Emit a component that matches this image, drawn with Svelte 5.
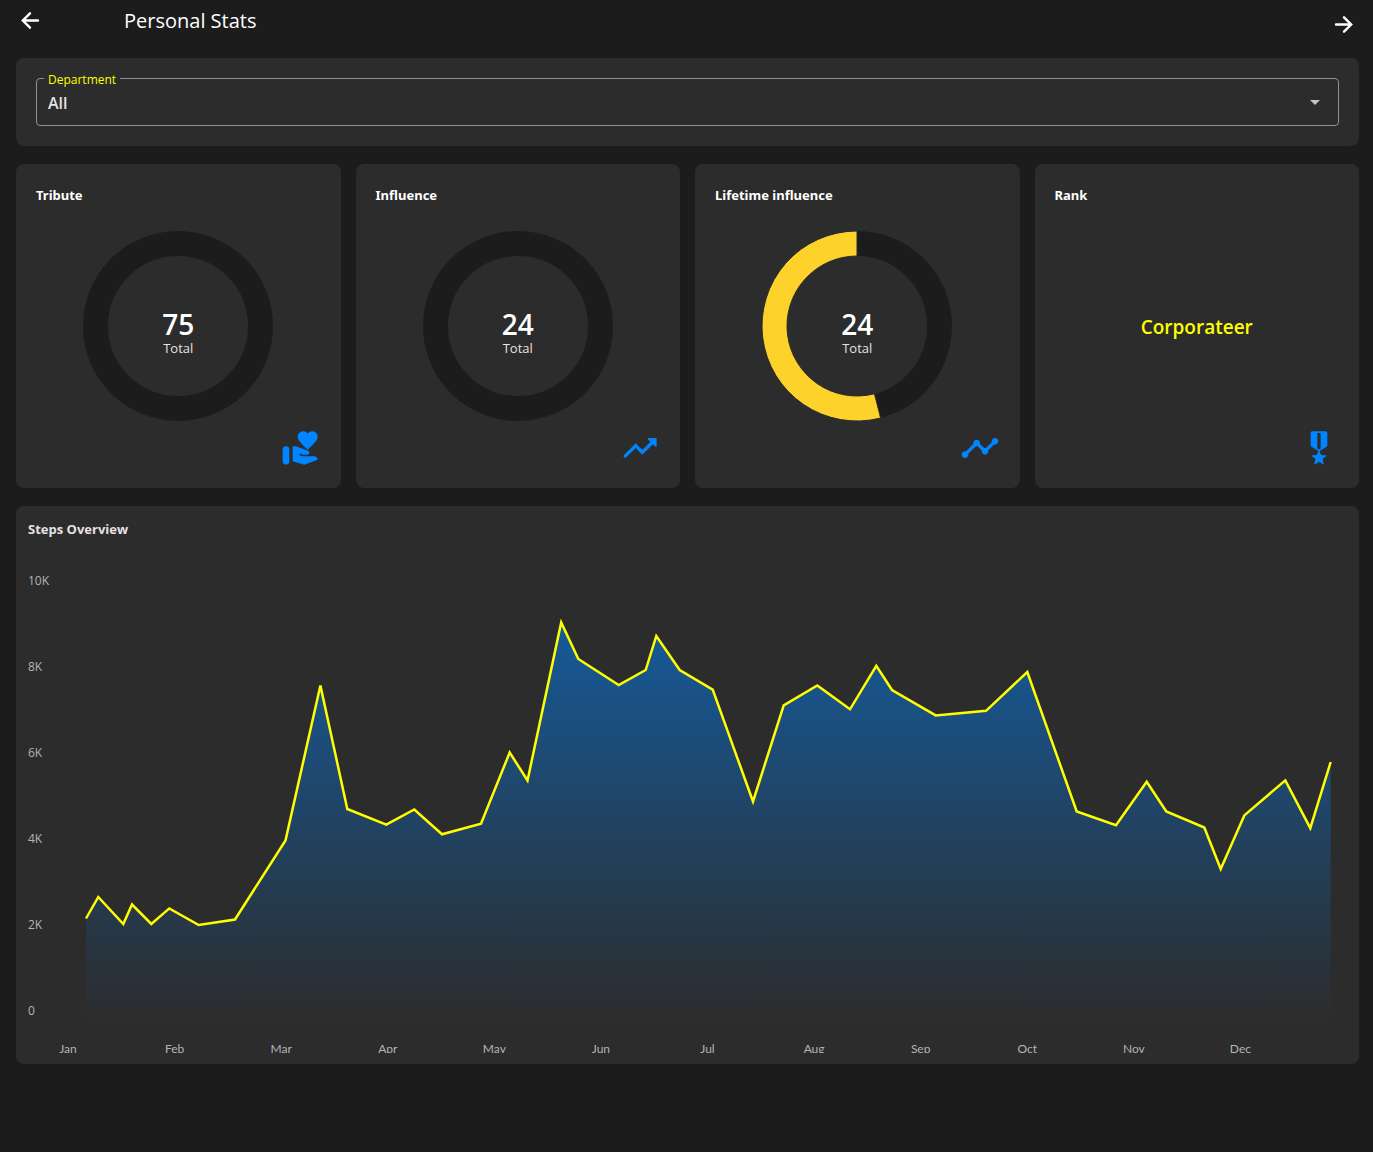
<script>
  const departments = ['All', 'Sales', 'Operations', 'Engineering'];
  let department = $state('All');

  // share: percentage of the ring that is filled, counted back from twelve o'clock
  const stats = [
    {
      title: 'Tribute',
      total: 75,
      share: 0,
      icon: 'M3 11a2 2 0 0 1 2 2v7a2 2 0 0 1-4 0v-7a2 2 0 0 1 2-2zM16 3.25C16.65 2.49 17.66 2 18.7 2 20.55 2 22 3.45 22 5.3c0 2.27-2.91 4.9-6 7.7-3.09-2.81-6-5.44-6-7.7C10 3.45 11.45 2 13.3 2c1.04 0 2.05.49 2.7 1.25zM20 17h-7l-2.09-.73.33-.94L13 16h2.8c.65 0 1.2-.55 1.2-1.2 0-.49-.3-.93-.76-1.12L8.97 11H7v9.02L14 22l8.01-3c-.01-1.1-.9-2-2.01-2z',
    },
    {
      title: 'Influence',
      total: 24,
      share: 0,
      icon: 'M16.85 6.85l1.44 1.44-4.88 4.88-3.29-3.29L9.41 9.2 8.7 9.88l-6.29 6.3c-.39.39-.39 1.02 0 1.41.39.39 1.02.39 1.41 0L9.41 12l4 4 .7-.71 5.59-5.58 1.44 1.44c.31.31.85.09.85-.35V6.5c.01-.28-.21-.5-.49-.5h-4.29c-.45 0-.67.54-.36.85z',
    },
    {
      title: 'Lifetime influence',
      total: 24,
      share: 54,
      icon: 'M23 8c0 1.1-.9 2-2 2-.18 0-.35-.02-.51-.07l-3.56 3.55c.05.16.07.34.07.52 0 1.1-.9 2-2 2s-2-.9-2-2c0-.18.02-.36.07-.52l-2.55-2.55c-.16.05-.34.07-.52.07s-.36-.02-.52-.07l-4.55 4.56c.05.16.07.33.07.51 0 1.1-.9 2-2 2s-2-.9-2-2 .9-2 2-2c.18 0 .35.02.51.07l4.56-4.55C8.02 9.36 8 9.18 8 9c0-1.1.9-2 2-2s2 .9 2 2c0 .18-.02.36-.07.52l2.55 2.55c.16-.05.34-.07.52-.07s.36.02.52.07l3.55-3.56C19.02 8.35 19 8.18 19 8c0-1.1.9-2 2-2s2 .9 2 2z',
    },
    {
      title: 'Rank',
      rank: 'Corporateer',
      icon: 'M17 10.43V3c0-.55-.45-1-1-1H8c-.55 0-1 .45-1 1v7.43c0 .35.18.68.49.86l4.18 2.51-.99 2.34-3.41.29 2.59 2.24L9.07 22 12 20.23 14.93 22l-.78-3.33 2.59-2.24-3.41-.29-.99-2.34 4.18-2.51c.3-.18.48-.5.48-.86zm-4 1.8l-1 .6-1-.6V3h2v9.23z',
    },
  ];

  const yLabels = ['10K', '8K', '6K', '4K', '2K', '0'];
  const months = ['Jan', 'Feb', 'Mar', 'Apr', 'May', 'Jun', 'Jul', 'Aug', 'Sep', 'Oct', 'Nov', 'Dec'];

  const points = [
    [86, 918.5], [98.3, 897], [123.3, 924], [132, 904.5], [151.3, 924], [169.3, 908.4], [198.7, 925],
    [235, 919.5], [285.5, 840.5], [320.4, 685.5], [347.3, 809], [386.3, 824.6], [414.3, 809.5],
    [442, 834.3], [481, 823.7], [509.7, 752.5], [527.5, 780.5], [561.2, 622.5], [578.3, 659],
    [618.7, 685], [645.7, 670], [656.3, 636], [679.7, 670], [712.7, 689.7], [753, 801.5],
    [783.7, 705.3], [817.3, 685.4], [850, 709.3], [876.3, 665.8], [892, 690], [935.7, 715.4],
    [986, 710.8], [1027.3, 672], [1076.7, 811.5], [1116, 825.2], [1146.7, 781.7], [1166.3, 811.5],
    [1204.3, 827.5], [1220.7, 869], [1244.3, 815.4], [1285.3, 780.4], [1310.3, 828.2], [1330.7, 762],
  ];
  const line = 'M' + points.map((p) => p.join(' ')).join('L');
  const area = `${line}V1024H${points[0][0]}Z`;

  // Ring sector from the given share back up to twelve o'clock
  function ringArc(share) {
    const a = (1 - share / 100) * 2 * Math.PI;
    const at = (r) => `${95 + r * Math.sin(a)} ${95 - r * Math.cos(a)}`;
    const large = share > 50 ? 1 : 0;
    return `M${at(95)}A95 95 0 ${large} 1 95 0V25A70 70 0 ${large} 0 ${at(70)}Z`;
  }
</script>

<div class="page">
  <header>
    <button class="nav" aria-label="Back">
      <svg width="24" height="24" viewBox="0 0 24 24"><path d="M20 12.5H5M12 5.3l-7.2 7.2 7.2 7.2" /></svg>
    </button>
    <h1>Personal Stats</h1>
    <button class="nav next" aria-label="Next">
      <svg width="24" height="24" viewBox="0 0 24 24"><path d="M4 12.5h15M12 5.3l7.2 7.2-7.2 7.2" /></svg>
    </button>
  </header>

  <main>
    <section class="card filter">
      <div class="field">
        <label for="department">Department</label>
        <select id="department" bind:value={department}>
          {#each departments as name}
            <option>{name}</option>
          {/each}
        </select>
        <svg class="caret" width="10" height="5" viewBox="0 0 10 5"><path d="M0 0h10L5 5z" /></svg>
      </div>
    </section>

    <div class="stats">
      {#each stats as stat}
        <section class="card stat">
          <h2>{stat.title}</h2>
          <div class="body">
            {#if stat.rank}
              <p class="rank">{stat.rank}</p>
            {:else}
              <svg class="ring" width="190" height="190" viewBox="0 0 190 190">
                <circle class="track" cx="95" cy="95" r="82.5" />
                {#if stat.share}
                  <path class="fill" d={ringArc(stat.share)} />
                {/if}
              </svg>
              <div class="total">
                <strong>{stat.total}</strong>
                <span>Total</span>
              </div>
            {/if}
          </div>
          <svg class="icon" width="40" height="40" viewBox="0 0 24 24"><path d={stat.icon} /></svg>
        </section>
      {/each}
    </div>

    <section class="card chart">
      <h2>Steps Overview</h2>
      <div class="plot">
        <div class="y-axis">
          {#each yLabels as label}<span>{label}</span>{/each}
        </div>
        <svg viewBox="68 572 1279 452" preserveAspectRatio="none">
          <defs>
            <linearGradient id="area-fade" x1="0" y1="0" x2="0" y2="1">
              <stop offset="0" stop-color="#0084ff" stop-opacity="0.52" />
              <stop offset="1" stop-color="#0084ff" stop-opacity="0" />
            </linearGradient>
          </defs>
          <path d={area} fill="url(#area-fade)" />
          <path class="line" d={line} />
        </svg>
      </div>
      <div class="x-axis">
        {#each months as month}
          <span class="tick"><span>{month}</span></span>
        {/each}
      </div>
    </section>
  </main>
</div>

<style>
  :global(body) {
    background: #1c1c1c;
  }

  .page {
    min-height: 100vh;
    box-sizing: border-box;
    background: #1c1c1c;
    color: #fff;
    font-family: 'Open Sans', 'Noto Sans', sans-serif;
    font-size: 13px;
    line-height: 16px;
  }

  h1,
  h2,
  p {
    margin: 0;
  }

  header {
    display: flex;
    align-items: flex-start;
    height: 50px;
    padding: 8px 17px 0 18px;
  }

  h1 {
    flex: 1;
    margin-left: 82px;
    font-size: 20px;
    font-weight: 400;
    line-height: 26px;
  }

  .nav {
    width: 24px;
    height: 24px;
    padding: 0;
    border: 0;
    background: none;
    cursor: pointer;
  }

  .next {
    margin-top: 4px;
  }

  .nav svg {
    display: block;
  }

  .nav path {
    fill: none;
    stroke: #fff;
    stroke-width: 2.4;
    stroke-linecap: round;
  }

  main {
    display: flex;
    flex-direction: column;
    gap: 18px;
    padding: 0 14px 24px 16px;
  }

  .card {
    border-radius: 8px;
    background: #2c2c2c;
  }

  .filter {
    padding: 20px;
  }

  .field {
    display: grid;
    position: relative;
    align-items: center;
  }

  .field label {
    position: absolute;
    top: -6px;
    left: 8px;
    padding: 0 4px;
    background: #2c2c2c;
    color: #ff0;
    font-size: 12px;
    line-height: 16px;
  }

  select {
    grid-area: 1 / 1;
    width: 100%;
    height: 48px;
    padding: 2px 11px 0;
    border: 1px solid #938f99;
    border-radius: 4px;
    appearance: none;
    background: none;
    color: #e6e1e5;
    font: 600 16px 'Open Sans', 'Noto Sans', sans-serif;
  }

  option {
    background: #2c2c2c;
  }

  .caret {
    grid-area: 1 / 1;
    justify-self: end;
    margin-right: 19px;
    fill: #c4c4c4;
    pointer-events: none;
  }

  .stats {
    display: grid;
    grid-template-columns: repeat(4, minmax(0, 1fr));
    gap: 15px;
  }

  .stat {
    display: flex;
    flex-direction: column;
    padding: 20px;
  }

  h2 {
    font-family: 'Noto Sans', 'Open Sans', sans-serif;
    font-size: 13px;
    font-weight: 700;
    line-height: 22px;
  }

  .body {
    display: grid;
    flex: 1;
    min-height: 190px;
    margin: 25px 0 7px;
    place-items: center;
  }

  .ring,
  .total {
    grid-area: 1 / 1;
  }

  .track {
    fill: none;
    stroke: #1c1c1c;
    stroke-width: 25;
  }

  .fill {
    fill: #fdd22b;
    stroke: #2c2c2c;
    stroke-width: 1;
  }

  .total {
    display: flex;
    flex-direction: column;
    align-items: center;
    padding-top: 12px;
    color: #e6e1e5;
  }

  .total strong {
    color: #fff;
    font-size: 28px;
    font-weight: 600;
    line-height: 32px;
  }

  .rank {
    padding-top: 2px;
    color: #ff0;
    font-size: 19px;
    font-weight: 600;
    line-height: 24px;
  }

  .icon {
    align-self: flex-end;
    fill: #0084ff;
  }

  .chart {
    padding: 12px 12px 11px;
  }

  .chart h2 {
    color: #e6e1e5;
    font-family: 'Open Sans', 'Noto Sans', sans-serif;
  }

  .plot {
    display: grid;
    grid-template-columns: 40px minmax(0, 1fr);
    margin: 32px 0 16px;
    color: #b4b4b4;
    font-size: 12px;
    line-height: 18px;
  }

  .plot svg {
    width: 100%;
    height: 452px;
  }

  .y-axis {
    display: flex;
    flex-direction: column;
    justify-content: space-between;
    height: 448px;
  }

  .line {
    fill: none;
    stroke: #ff0;
    stroke-width: 2.5;
    vector-effect: non-scaling-stroke;
  }

  /* The row is shorter than its text, so descenders are cut at its edge. */
  .x-axis {
    display: grid;
    grid-template-columns: repeat(12, minmax(0, 1fr));
    height: 13px;
    padding-left: 40px;
    overflow: hidden;
    color: #b4b4b4;
    font-family: Lato, 'Open Sans', sans-serif;
    font-size: 12px;
    line-height: 18px;
  }

  .tick {
    display: flex;
    justify-content: center;
    width: 0;
  }
</style>
